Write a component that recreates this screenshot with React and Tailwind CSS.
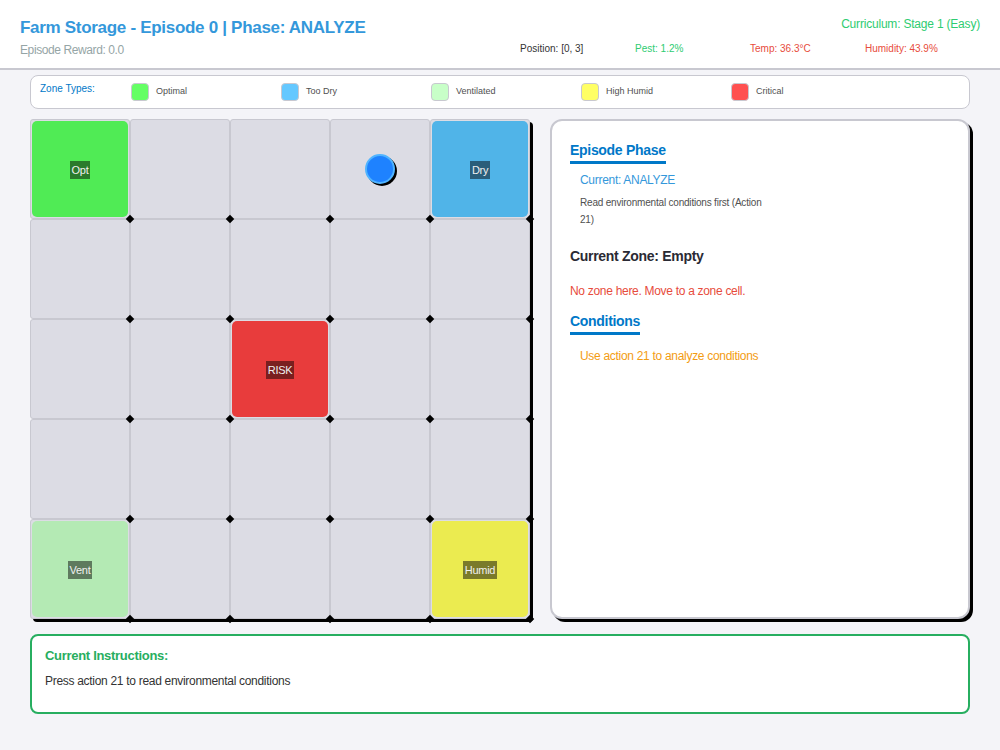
import React from "react";

const font = { fontFamily: '"Liberation Sans", Arial, sans-serif' };

const zones = {
  "0-0": { label: "Opt", bg: "bg-[#50eb55]", tag: "bg-[#2a7a2c]" },
  "0-4": { label: "Dry", bg: "bg-[#50b4e8]", tag: "bg-[#2a5e7a]" },
  "2-2": { label: "RISK", bg: "bg-[#e83c3c]", tag: "bg-[#7a1f1f]" },
  "4-0": { label: "Vent", bg: "bg-[#b4eab4]", tag: "bg-[#5e7a5e]" },
  "4-4": { label: "Humid", bg: "bg-[#ebeb50]", tag: "bg-[#7a7a2a]" },
};

const legend = [
  { name: "Optimal", color: "bg-[#64ff64]" },
  { name: "Too Dry", color: "bg-[#64c8ff]" },
  { name: "Ventilated", color: "bg-[#c8ffc8]" },
  { name: "High Humid", color: "bg-[#ffff64]" },
  { name: "Critical", color: "bg-[#ff5050]" },
];

const Cell = ({ r, c }) => {
  const zone = zones[`${r}-${c}`];
  return (
    <div className="w-[100px] h-[100px] border border-[#c8c8d0] bg-[#dcdce4] rounded-[3px] relative flex items-center justify-center">
      {zone && (
        <div className={`absolute inset-[1px] rounded-[5px] ${zone.bg} flex items-center justify-center`}>
          <span className={`${zone.tag} text-[#f0f0f0] text-[11px] tracking-[-0.3px] px-[2px] py-[2px] leading-[14px] mt-[2px]`}>
            {zone.label}
          </span>
        </div>
      )}
      {r === 0 && c === 3 && (
        <div className="w-[30px] h-[30px] rounded-full bg-[#1e82ff] border-2 border-[#50b4ff] shadow-[2px_2px_0_#000]" />
      )}
    </div>
  );
};

const App = () => {
  const rows = [0, 1, 2, 3, 4];
  const dots = [100, 200, 300, 400, 500];

  return (
    <div style={font} className="w-[1000px] h-[750px] bg-[#f4f4f8] flex flex-col">
      {/* HEADER */}
      <div className="h-[70px] bg-white border-b-2 border-[#c8c8d0] flex justify-between px-[20px]">
        <div className="pt-[17px]">
          <h1 className="text-[17px] tracking-[-0.3px] font-bold text-[#3498db] leading-[21px]">
            Farm Storage - Episode 0 | Phase: ANALYZE
          </h1>
          <p className="text-[12px] tracking-[-0.4px] text-[#95a5a6] mt-[3px]">Episode Reward: 0.0</p>
        </div>
        <div className="flex flex-col items-end pt-[16px]">
          <p className="text-[12px] tracking-[-0.2px] text-[#2ecc71] leading-[16px]">Curriculum: Stage 1 (Easy)</p>
          <div className="flex text-[10px] mt-[11px] leading-[12px]">
            <span className="w-[115px] text-[#333]">Position: [0, 3]</span>
            <span className="w-[115px] text-[#2ecc71]">Pest: 1.2%</span>
            <span className="w-[115px] text-[#e74c3c]">Temp: 36.3°C</span>
            <span className="w-[115px] text-[#e74c3c]">Humidity: 43.9%</span>
          </div>
        </div>
      </div>

      {/* LEGEND */}
      <div className="mx-[30px] mt-[5px] h-[34px] bg-white border border-[#c8c8d0] rounded-[8px] flex items-center pl-[9px]">
        <span className="w-[91px] text-[10px] text-[#0078c8] self-start mt-[5px]">Zone Types:</span>
        {legend.map((item) => (
          <div key={item.name} className="w-[150px] flex items-center">
            <div className={`w-[18px] h-[18px] rounded-[4px] border border-[#c8c8d0] ${item.color}`} />
            <span className="ml-[7px] text-[9px] text-[#505050]">{item.name}</span>
          </div>
        ))}
      </div>

      {/* MAIN */}
      <div className="flex mx-[30px] mt-[10px] gap-[20px]">
        <div className="relative w-[500px] h-[500px] shadow-[3px_3px_0_#000] rounded-[4px]">
          <div className="grid grid-cols-5">
            {rows.map((r) => rows.map((c) => <Cell key={`${r}-${c}`} r={r} c={c} />))}
          </div>
          {dots.map((y) =>
            dots.map((x) => (
              <div
                key={`${x}-${y}`}
                className="absolute w-[6px] h-[6px] bg-black rotate-45"
                style={{ left: x - 3, top: y - 3 }}
              />
            ))
          )}
        </div>

        <div className="w-[420px] h-[500px] bg-white border-2 border-[#c8c8d0] rounded-[12px] shadow-[3px_3px_0_#000] px-[18px] pt-[17px]">
          <h2 className="inline-block text-[14px] tracking-[-0.3px] font-bold text-[#0078c8] border-b-[3px] border-[#0078c8] pb-[3px] leading-[16px]">
            Episode Phase
          </h2>
          <div className="pl-[10px]">
            <p className="text-[12px] tracking-[-0.3px] text-[#3498db] mt-[7px]">Current: ANALYZE</p>
            <p className="text-[10px] tracking-[-0.2px] text-[#505050] mt-[5px] w-[190px] leading-[17px]">
              Read environmental conditions first (Action 21)
            </p>
          </div>
          <h3 className="text-[14px] tracking-[-0.3px] font-bold text-[#2a2a34] mt-[18px]">Current Zone: Empty</h3>
          <p className="text-[12px] tracking-[-0.3px] text-[#e74c3c] mt-[15px]">No zone here. Move to a zone cell.</p>
          <h2 className="inline-block text-[14px] tracking-[-0.3px] font-bold text-[#0078c8] border-b-[3px] border-[#0078c8] pb-[3px] leading-[16px] mt-[13px]">
            Conditions
          </h2>
          <p className="pl-[10px] text-[12px] tracking-[-0.3px] text-[#f39c12] mt-[12px]">Use action 21 to analyze conditions</p>
        </div>
      </div>

      {/* INSTRUCTIONS */}
      <div className="mx-[30px] mt-[15px] h-[80px] bg-white border-2 border-[#27ae60] rounded-[8px] px-[13px] pt-[10px]">
        <p className="text-[13px] tracking-[-0.3px] font-bold text-[#27ae60]">Current Instructions:</p>
        <p className="text-[12px] tracking-[-0.3px] text-[#333] mt-[6px]">Press action 21 to read environmental conditions</p>
      </div>
    </div>
  );
};

export default App;
